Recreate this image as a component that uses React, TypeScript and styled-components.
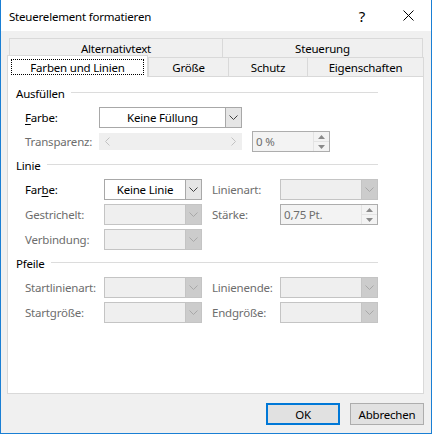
import React from "react";
import styled, { createGlobalStyle, css } from "styled-components";

const GlobalStyle = createGlobalStyle`
  html, body {
    margin: 0;
    padding: 0;
    background: #ffffff;
  }
  * {
    box-sizing: border-box;
  }
`;

const Chevron = ({ color }: { color: string }) => (
  <svg width="9" height="5" viewBox="0 0 9 5">
    <path d="M0.5 0.5 L4.5 4.5 L8.5 0.5" fill="none" stroke={color} strokeWidth="1" />
  </svg>
);

const Combo = ({ value, width, disabled }: { value?: string; width: number; disabled?: boolean }) => (
  <ComboBox width={width} disabled={disabled}>
    <ComboText>{value}</ComboText>
    <ComboButton disabled={disabled}>
      <Chevron color={disabled ? "#a8a8a8" : "#404040"} />
    </ComboButton>
  </ComboBox>
);

const Spinner = ({ value, width }: { value: string; width: number }) => (
  <SpinBox width={width}>
    <SpinText>{value}</SpinText>
    <SpinButtons>
      <SpinArrow>
        <svg width="7" height="4" viewBox="0 0 7 4">
          <path d="M0 4 L3.5 0 L7 4 Z" fill="#8a8a8a" />
        </svg>
      </SpinArrow>
      <SpinArrow>
        <svg width="7" height="4" viewBox="0 0 7 4">
          <path d="M0 0 L3.5 4 L7 0 Z" fill="#8a8a8a" />
        </svg>
      </SpinArrow>
    </SpinButtons>
  </SpinBox>
);

const App = () => {
  return (
    <>
      <GlobalStyle />
      <Window>
        <TitleBar>
          <Title>Steuerelement formatieren</Title>
          <TitleButton>?</TitleButton>
          <TitleButton>
            <svg width="11" height="11" viewBox="0 0 11 11">
              <path d="M0.5 0.5 L10.5 10.5 M10.5 0.5 L0.5 10.5" stroke="#000" strokeWidth="1" />
            </svg>
          </TitleButton>
        </TitleBar>
        <Body>
          <TabRowTop>
            <Tab width={213}>Alternativtext</Tab>
            <Tab width={201} last>
              Steuerung
            </Tab>
          </TabRowTop>
          <TabRow>
            <ActiveTab>
              <FocusRect>Farben und Linien</FocusRect>
            </ActiveTab>
            <Tab width={80}>Größe</Tab>
            <Tab width={79}>Schutz</Tab>
            <Tab width={117} last>
              Eigenschaften
            </Tab>
          </TabRow>
          <Panel>
            <SectionHeader>
              <span>Ausfüllen</span>
            </SectionHeader>
            <FillGrid>
              <Label>
                <u>F</u>arbe:
              </Label>
              <Combo value="Keine Füllung" width={143} />
              <Spacer />
              <Spacer />
              <Label disabled>Transparenz:</Label>
              <ScrollTrack>
                <ScrollArrow>
                  <svg width="5" height="9" viewBox="0 0 5 9">
                    <path d="M4.5 0.5 L0.5 4.5 L4.5 8.5" fill="none" stroke="#c2c2c2" />
                  </svg>
                </ScrollArrow>
                <ScrollArrow>
                  <svg width="5" height="9" viewBox="0 0 5 9">
                    <path d="M0.5 0.5 L4.5 4.5 L0.5 8.5" fill="none" stroke="#c2c2c2" />
                  </svg>
                </ScrollArrow>
              </ScrollTrack>
              <Spacer />
              <Spinner value="0 %" width={78} />
            </FillGrid>

            <SectionHeader gap>
              <span>Linie</span>
            </SectionHeader>
            <FieldGrid>
              <Label>
                Far<u>b</u>e:
              </Label>
              <Combo value="Keine Linie" width={98} />
              <Label disabled indent>
                Linienart:
              </Label>
              <Combo width={98} disabled />
              <Label disabled>Gestrichelt:</Label>
              <Combo width={98} disabled />
              <Label disabled indent>
                Stärke:
              </Label>
              <Spinner value="0,75 Pt." width={98} />
              <Label disabled>Verbindung:</Label>
              <Combo width={98} disabled />
            </FieldGrid>

            <SectionHeader gap>
              <span>Pfeile</span>
            </SectionHeader>
            <FieldGrid>
              <Label disabled>Startlinienart:</Label>
              <Combo width={98} disabled />
              <Label disabled indent>
                Linienende:
              </Label>
              <Combo width={98} disabled />
              <Label disabled>Startgröße:</Label>
              <Combo width={98} disabled />
              <Label disabled indent>
                Endgröße:
              </Label>
              <Combo width={98} disabled />
            </FieldGrid>
          </Panel>
          <Footer>
            <Button primary>OK</Button>
            <Button>Abbrechen</Button>
          </Footer>
        </Body>
      </Window>
    </>
  );
};

const Window = styled.div`
  width: 432px;
  height: 434px;
  border: 1px solid #1a7fd4;
  border-top: none;
  background: #f0f0f0;
  font-family: "Noto Sans", "Liberation Sans", sans-serif;
  font-size: 11.5px;
  letter-spacing: -0.2px;
  color: #000;
  display: flex;
  flex-direction: column;
`;

const TitleBar = styled.div`
  height: 31px;
  background: #ffffff;
  display: flex;
  align-items: center;
  padding-left: 8px;
`;

const Title = styled.div`
  flex: 1;
  font-size: 11.5px;
  padding-top: 1px;
`;

const TitleButton = styled.div`
  width: 46px;
  height: 31px;
  display: flex;
  align-items: center;
  justify-content: center;
  font-size: 15px;
`;

const Body = styled.div`
  flex: 1;
  padding: 7px 7px 0 6px;
  display: flex;
  flex-direction: column;
`;

const TabRowTop = styled.div`
  display: flex;
  margin-left: 2px;
  height: 19px;
`;

const TabRow = styled.div`
  display: flex;
  height: 19px;
`;

const Tab = styled.div<{ width: number; last?: boolean }>`
  width: ${(p) => p.width}px;
  height: 100%;
  border-top: 1px solid #d9d9d9;
  border-left: 1px solid #d9d9d9;
  ${(p) =>
    p.last &&
    css`
      border-right: 1px solid #d9d9d9;
    `}
  display: flex;
  align-items: center;
  justify-content: center;
  line-height: 1;
  padding-top: 1px;
`;

const ActiveTab = styled.div`
  position: relative;
  z-index: 1;
  width: 141px;
  height: 22px;
  margin-top: -2px;
  background: #ffffff;
  border: 1px solid #d9d9d9;
  border-bottom: none;
  padding: 3px 3px 2px 3px;
`;

const FocusRect = styled.div`
  height: 100%;
  border: 1px dotted #000;
  display: flex;
  align-items: center;
  justify-content: center;
`;

const Panel = styled.div`
  height: 318px;
  background: #ffffff;
  border: 1px solid #d9d9d9;
  padding: 10px 45px 0 8px;
`;

const SectionHeader = styled.div<{ gap?: boolean }>`
  display: flex;
  align-items: center;
  height: 14px;
  line-height: 14px;
  margin-top: ${(p) => (p.gap ? "7px" : "0")};
  margin-bottom: 6px;
  &::after {
    content: "";
    flex: 1;
    height: 1px;
    margin-left: 6px;
    margin-top: -3px;
    background: #dcdcdc;
  }
`;

const FillGrid = styled.div`
  display: grid;
  grid-template-columns: 74px 143px 10px 78px;
  grid-auto-rows: 21px;
  row-gap: 3px;
  padding-left: 9px;
  align-items: center;
`;

const FieldGrid = styled.div`
  display: grid;
  grid-template-columns: 79px 98px 78px 98px;
  grid-auto-rows: 21px;
  row-gap: 4px;
  padding-left: 9px;
  align-items: center;
`;

const Spacer = styled.div``;

const Label = styled.div<{ disabled?: boolean; indent?: boolean }>`
  color: ${(p) => (p.disabled ? "#6d6d6d" : "#000")};
  padding-left: ${(p) => (p.indent ? "10px" : "0")};
  white-space: nowrap;
  u {
    text-underline-offset: 2px;
  }
`;

const ComboBox = styled.div<{ width: number; disabled?: boolean }>`
  width: ${(p) => p.width}px;
  height: 21px;
  display: flex;
  border: 1px solid ${(p) => (p.disabled ? "#c4c4c4" : "#a8a8a8")};
  background: ${(p) => (p.disabled ? "#efefef" : "#ffffff")};
`;

const ComboText = styled.div`
  flex: 1;
  display: flex;
  align-items: center;
  justify-content: center;
`;

const ComboButton = styled.div<{ disabled?: boolean }>`
  width: 16px;
  display: flex;
  align-items: center;
  justify-content: center;
  background: ${(p) => (p.disabled ? "#cccccc" : "#e5e5e5")};
  border-left: 1px solid ${(p) => (p.disabled ? "#c4c4c4" : "#a8a8a8")};
`;

const ScrollTrack = styled.div`
  width: 143px;
  height: 17px;
  background: #efefef;
  display: flex;
  justify-content: space-between;
  align-items: center;
  padding: 0 6px;
`;

const ScrollArrow = styled.div`
  display: flex;
`;

const SpinBox = styled.div<{ width: number }>`
  width: ${(p) => p.width}px;
  height: 21px;
  display: flex;
  border: 1px solid #adadad;
  background: #f3f3f3;
`;

const SpinText = styled.div`
  flex: 1;
  display: flex;
  align-items: center;
  padding-left: 3px;
  color: #6d6d6d;
`;

const SpinButtons = styled.div`
  width: 16px;
  display: flex;
  flex-direction: column;
  border-left: 1px solid #e3e3e3;
`;

const SpinArrow = styled.div`
  flex: 1;
  display: flex;
  align-items: center;
  justify-content: center;
  & + & {
    border-top: 1px solid #e3e3e3;
  }
`;

const Footer = styled.div`
  display: flex;
  justify-content: flex-end;
  gap: 10px;
  margin-top: 9px;
`;

const Button = styled.div<{ primary?: boolean }>`
  width: 74px;
  height: 22px;
  display: flex;
  align-items: center;
  justify-content: center;
  background: #e1e1e1;
  border: ${(p) => (p.primary ? "2px solid #0078d7" : "1px solid #adadad")};
`;

export default App;
